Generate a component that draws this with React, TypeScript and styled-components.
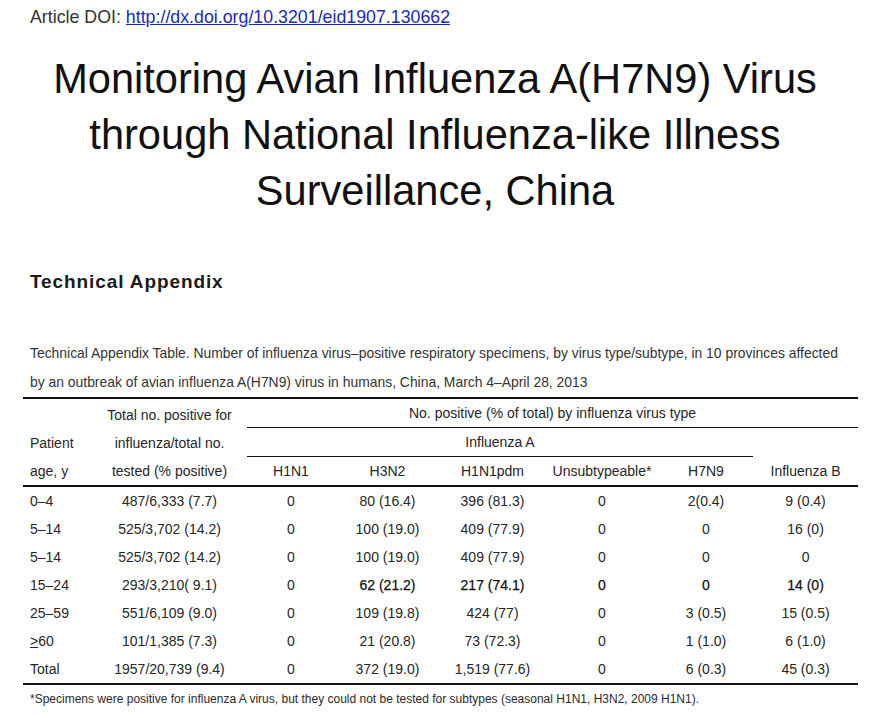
import styled, { createGlobalStyle } from 'styled-components';

const GlobalStyle = createGlobalStyle`
  html, body {
    margin: 0;
    padding: 0;
    background: #ffffff;
  }
  body {
    font-family: "Liberation Sans", Arial, sans-serif;
    color: #222222;
  }
`;

type Row = {
  age: React.ReactNode;
  total: string;
  cells: string[];
  bold?: number[];
};

const rows: Row[] = [
  { age: '0–4', total: '487/6,333 (7.7)', cells: ['0', '80 (16.4)', '396 (81.3)', '0', '2(0.4)', '9 (0.4)'] },
  { age: '5–14', total: '525/3,702 (14.2)', cells: ['0', '100 (19.0)', '409 (77.9)', '0', '0', '16 (0)'] },
  { age: '5–14', total: '525/3,702 (14.2)', cells: ['0', '100 (19.0)', '409 (77.9)', '0', '0', '0'] },
  {
    age: '15–24',
    total: '293/3,210( 9.1)',
    cells: ['0', '62 (21.2)', '217 (74.1)', '0', '0', '14 (0)'],
    bold: [1, 2, 3, 4, 5],
  },
  { age: '25–59', total: '551/6,109 (9.0)', cells: ['0', '109 (19.8)', '424 (77)', '0', '3 (0.5)', '15 (0.5)'] },
  {
    age: (
      <>
        <u>&gt;</u>60
      </>
    ),
    total: '101/1,385 (7.3)',
    cells: ['0', '21 (20.8)', '73 (72.3)', '0', '1 (1.0)', '6 (1.0)'],
  },
  { age: 'Total', total: '1957/20,739 (9.4)', cells: ['0', '372 (19.0)', '1,519 (77.6)', '0', '6 (0.3)', '45 (0.3)'] },
];

const colWidths = [69, 155, 88, 105, 105, 114, 94, 105];

export default function App() {
  return (
    <Page>
      <GlobalStyle />
      <DoiLine>
        Article DOI: <DoiLink href="#">http://dx.doi.org/10.3201/eid1907.130662</DoiLink>
      </DoiLine>

      <Title>
        Monitoring Avian Influenza A(H7N9) Virus
        <br />
        through National Influenza-like Illness
        <br />
        Surveillance, China
      </Title>

      <SectionHeading>Technical Appendix</SectionHeading>

      <Caption>
        Technical Appendix Table. Number of influenza virus–positive respiratory specimens, by virus type/subtype, in 10 provinces affected
        <br />
        by an outbreak of avian influenza A(H7N9) virus in humans, China, March 4–April 28, 2013
      </Caption>

      <DataTable>
        <colgroup>
          {colWidths.map((w, i) => (
            <col key={i} style={{ width: w }} />
          ))}
        </colgroup>
        <thead>
          <tr>
            <HeadCell rowSpan={3} $align="left" $valign="bottom">
              Patient
              <br />
              age, y
            </HeadCell>
            <HeadCell rowSpan={3} $valign="bottom">
              Total no. positive for
              <br />
              influenza/total no.
              <br />
              tested (% positive)
            </HeadCell>
            <HeadCell colSpan={6} $rule>
              No. positive (% of total) by influenza virus type
            </HeadCell>
          </tr>
          <tr>
            <HeadCell colSpan={5} $rule>
              Influenza A
            </HeadCell>
            <HeadCell rowSpan={2} $valign="bottom">
              Influenza B
            </HeadCell>
          </tr>
          <tr>
            <HeadCell>H1N1</HeadCell>
            <HeadCell>H3N2</HeadCell>
            <HeadCell>H1N1pdm</HeadCell>
            <HeadCell>Unsubtypeable*</HeadCell>
            <HeadCell>H7N9</HeadCell>
          </tr>
        </thead>
        <tbody>
          {rows.map((row, i) => (
            <tr key={i}>
              <Cell $align="left">{row.age}</Cell>
              <Cell>{row.total}</Cell>
              {row.cells.map((c, j) => (
                <Cell key={j} $bold={row.bold?.includes(j)}>
                  {c}
                </Cell>
              ))}
            </tr>
          ))}
        </tbody>
      </DataTable>

      <Footnote>
        *Specimens were positive for influenza A virus, but they could not be tested for subtypes (seasonal H1N1, H3N2, 2009 H1N1).
      </Footnote>
    </Page>
  );
}

const Page = styled.div`
  width: 810px;
  padding: 6px 54px 0 30px;
  display: flex;
  flex-direction: column;
`;

const DoiLine = styled.div`
  font-size: 17.8px;
  line-height: 22px;
  color: #333333;
  white-space: nowrap;
`;

const DoiLink = styled.a`
  color: #1a2ab8;
  text-decoration: underline;
`;

const Title = styled.h1`
  margin: 23px 0 0;
  font-size: 41.6px;
  font-weight: normal;
  line-height: 56px;
  text-align: center;
  color: #111111;
  white-space: nowrap;
`;

const SectionHeading = styled.h2`
  margin: 51px 0 0;
  font-size: 19px;
  line-height: 24px;
  font-weight: bold;
  letter-spacing: 0.9px;
  color: #1a1a1a;
`;

const Caption = styled.p`
  margin: 45px 0 0;
  font-size: 13.9px;
  line-height: 28.5px;
  color: #333333;
  white-space: nowrap;
`;

const DataTable = styled.table`
  margin: 1px 0 0 -7px;
  width: 835px;
  table-layout: fixed;
  border-collapse: collapse;
  border-top: 2px solid #111111;
  border-bottom: 2px solid #111111;
  font-size: 14px;
  color: #262626;

  thead {
    border-bottom: 2px solid #111111;
  }
`;

const HeadCell = styled.th<{ $align?: 'left' | 'center'; $valign?: 'middle' | 'bottom'; $rule?: boolean }>`
  padding: 0 0 0 ${(p) => (p.$align === 'left' ? '7px' : '0')};
  height: 28px;
  line-height: 28px;
  font-weight: normal;
  text-align: ${(p) => p.$align ?? 'center'};
  vertical-align: ${(p) => p.$valign ?? 'middle'};
  white-space: nowrap;
  border-bottom: ${(p) => (p.$rule ? '1px solid #111111' : 'none')};
`;

const Cell = styled.td<{ $align?: 'left' | 'center'; $bold?: boolean }>`
  padding: 0 0 0 ${(p) => (p.$align === 'left' ? '7px' : '0')};
  height: 28px;
  line-height: 28px;
  text-align: ${(p) => p.$align ?? 'center'};
  font-weight: normal;
  color: ${(p) => (p.$bold ? '#111111' : 'inherit')};
  -webkit-text-stroke: ${(p) => (p.$bold ? '0.25px #111111' : '0')};
  white-space: nowrap;

  u {
    text-decoration: underline;
  }
`;

const Footnote = styled.p`
  margin: 4px 0 0;
  font-size: 12px;
  line-height: 20px;
  color: #2a2a2a;
  white-space: nowrap;
`;
